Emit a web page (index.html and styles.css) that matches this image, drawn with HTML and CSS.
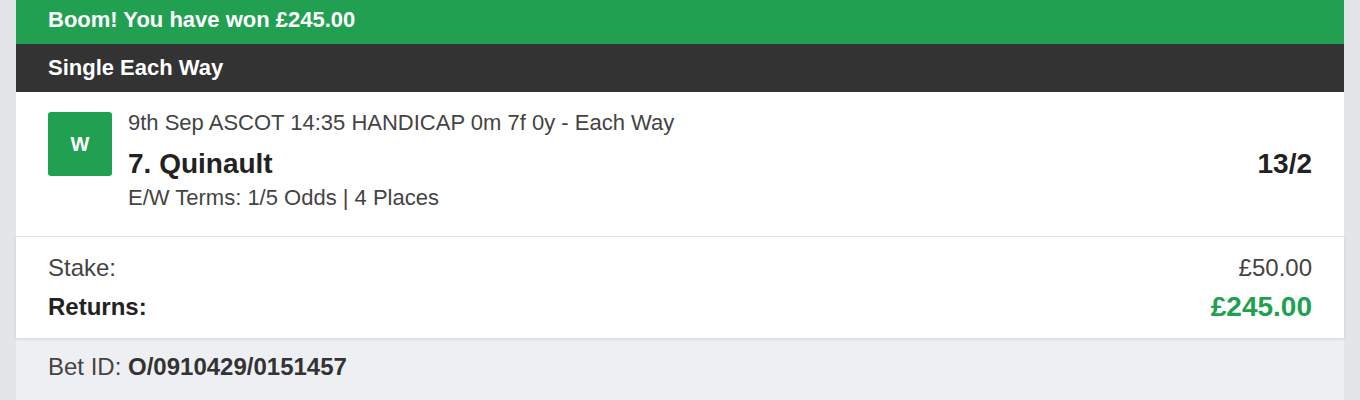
FILE: index.html
```html
<!DOCTYPE html>
<html>
<head>
<meta charset="utf-8">
<link rel="stylesheet" href="styles.css">
</head>
<body>
<div class="card">
  <div class="banner">Boom! You have won £245.00</div>
  <div class="type">Single Each Way</div>
  <div class="selection">
    <div class="badge">W</div>
    <div class="info">
      <div class="event">9th Sep ASCOT 14:35 HANDICAP 0m 7f 0y - Each Way</div>
      <div class="runner-row">
        <span class="runner">7. Quinault</span>
        <span class="odds">13/2</span>
      </div>
      <div class="terms">E/W Terms: 1/5 Odds | 4 Places</div>
    </div>
  </div>
  <div class="totals">
    <div class="row"><span class="label">Stake:</span><span class="value">£50.00</span></div>
    <div class="row returns"><span class="label">Returns:</span><span class="value win">£245.00</span></div>
  </div>
  <div class="footer">Bet ID: <b>O/0910429/0151457</b></div>
</div>
</body>
</html>
```

FILE: styles.css
```css
html, body {
  margin: 0;
  padding: 0;
  background: #e3e6e9;
  font-family: "Liberation Sans", Arial, sans-serif;
}
.card {
  margin: 0 16px;
  background: #eeeff3;
  min-height: 400px;
}
.banner {
  background: #21a052;
  color: #fff;
  font-weight: bold;
  font-size: 22px;
  height: 44px;
  line-height: 40px;
  padding: 0 32px;
}
.type {
  background: #333333;
  color: #fff;
  font-weight: bold;
  font-size: 22px;
  height: 48px;
  line-height: 48px;
  padding: 0 32px;
}
.selection {
  background: #fff;
  display: flex;
  gap: 16px;
  padding: 20px 32px 27px;
  border-bottom: 1px solid #e3e5e8;
}
.badge {
  width: 64px;
  height: 64px;
  flex: none;
  background: #21a052;
  border-radius: 3px;
  color: #fff;
  font-weight: bold;
  font-size: 20px;
  display: flex;
  align-items: center;
  justify-content: center;
}
.info {
  flex: 1;
  display: flex;
  flex-direction: column;
}
.event {
  font-size: 22px;
  line-height: 22px;
  color: #444;
}
.runner-row {
  display: flex;
  justify-content: space-between;
  margin-top: 16px;
  line-height: 28px;
}
.runner, .odds {
  font-size: 28px;
  font-weight: bold;
  color: #222;
}
.terms {
  margin-top: 9px;
  font-size: 22px;
  line-height: 22px;
  color: #444;
}
.totals {
  background: #fff;
  padding: 19px 32px 17px;
  box-shadow: 0 1px 3px rgba(0, 0, 0, 0.12);
  display: flex;
  flex-direction: column;
  gap: 13px;
}
.row {
  display: flex;
  justify-content: space-between;
  align-items: center;
  font-size: 24px;
  line-height: 24px;
  color: #444;
}
.returns {
  line-height: 28px;
}
.returns .label {
  font-weight: bold;
  color: #222;
}
.win {
  color: #21a052;
  font-weight: bold;
  font-size: 28px;
}
.footer {
  padding: 17px 32px;
  font-size: 24px;
  line-height: 24px;
  color: #444;
}
.footer b {
  color: #333;
}
```
